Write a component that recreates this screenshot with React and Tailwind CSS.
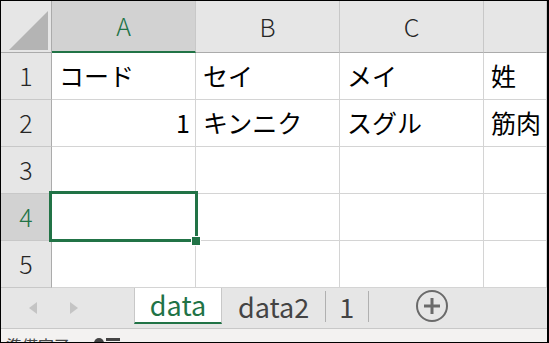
import { useState } from 'react';

const font = { fontFamily: '"Noto Sans CJK JP", "Noto Sans", sans-serif' };

const columns = ['A', 'B', 'C', ''];

const rows = [
  ['コード', 'セイ', 'メイ', '姓'],
  ['1', 'キンニク', 'スグル', '筋肉'],
  ['', '', '', ''],
  ['', '', '', ''],
  ['', '', '', ''],
];

const Corner = () => (
  <div className="relative bg-[#e6e6e6] border-r border-b border-[#ababab]">
    <svg width="50" height="51" className="absolute left-0 top-0">
      <polygon points="8,49 47,10 47,49" fill="#b4b4b4" />
    </svg>
  </div>
);

const ColumnHeader = ({ label, active }) => (
  <div
    className={
      active
        ? 'flex items-center justify-center bg-[#d2d2d2] border-r border-[#c8c8c8] border-b-2 border-b-[#217346] text-[#217346] text-[25px] font-light'
        : 'flex items-center justify-center bg-[#e6e6e6] border-r border-[#c8c8c8] border-b border-b-[#ababab] text-[#262626] text-[25px] font-light'
    }
  >
    {label}
  </div>
);

const RowHeader = ({ n, active }) => (
  <div
    className={
      active
        ? 'flex items-center justify-center bg-[#d2d2d2] border-r border-[#ababab] border-b border-b-[#c8c8c8] text-[#217346] text-[25px] font-light'
        : 'flex items-center justify-center bg-[#e6e6e6] border-r border-[#ababab] border-b border-b-[#c8c8c8] text-[#262626] text-[25px] font-light'
    }
  >
    {n}
  </div>
);

const Cell = ({ value, selected }) => {
  const isNumber = value !== '' && !isNaN(Number(value));
  return (
    <div
      className={
        'relative flex items-center border-r border-b border-[#d4d4d4] text-[25px] text-black whitespace-nowrap overflow-visible ' +
        (isNumber ? 'justify-end pr-[5px]' : 'pl-[7px]')
      }
    >
      {value}
      {selected && (
        <div className="absolute -left-[3px] -top-[3px] w-[149px] h-[51px] border-[3px] border-[#217346] z-10">
          <div className="absolute left-[139px] top-[42px] w-[8px] h-[8px] bg-[#217346] border border-white box-content" />
        </div>
      )}
    </div>
  );
};

const App = () => {
  const [activeSheet] = useState('data');

  return (
    <div
      className="w-[549px] h-[343px] border border-black border-r-2 overflow-hidden flex flex-col bg-white"
      style={font}
    >
      <div className="grid grid-cols-[51px_144px_144px_144px_1fr] grid-rows-[52px_47px_47px_47px_47px_47px] overflow-hidden">
        <Corner />
        {columns.map((c, i) => (
          <ColumnHeader key={i} label={c} active={i === 0} />
        ))}
        {rows.map((row, r) => (
          <div key={r} className="contents">
            <RowHeader n={r + 1} active={r === 3} />
            {row.map((v, c) => (
              <Cell key={c} value={v} selected={r === 3 && c === 0} />
            ))}
          </div>
        ))}
      </div>

      <div className="h-[41px] flex items-stretch bg-[#e6e6e6] border-b border-[#c8c8c8]">
        <div className="w-[133px] flex items-center">
          <svg width="10" height="14" className="ml-[27px]">
            <polygon points="9,1 1,7 9,13" fill="#c4c4c4" />
          </svg>
          <svg width="10" height="14" className="ml-[31px]">
            <polygon points="1,1 9,7 1,13" fill="#c4c4c4" />
          </svg>
        </div>
        <div className="w-[88px] h-[36px] bg-white border-l border-r border-[#c8c8c8] border-b-2 border-b-[#217346] flex items-center justify-center text-[27px] text-[#217346] leading-none pb-[2px]">
          {activeSheet}
        </div>
        <div className="flex items-center text-[27px] text-[#444444] leading-none pb-[4px]">
          <span className="pl-[16px] pr-[16px]">data2</span>
          <span className="w-px h-[31px] bg-[#b0b0b0]" />
          <span className="pl-[13px] pr-[14px]">1</span>
          <span className="w-px h-[31px] bg-[#b0b0b0]" />
        </div>
        <div className="flex items-center pl-[46px] pb-[4px]">
          <svg width="34" height="34" viewBox="0 0 34 34">
            <circle cx="17" cy="17" r="15" fill="none" stroke="#6a6a6a" strokeWidth="2" />
            <rect x="9" y="15.5" width="16" height="3" fill="#6a6a6a" />
            <rect x="15.5" y="9" width="3" height="16" fill="#6a6a6a" />
          </svg>
        </div>
      </div>

      <div className="flex-1 bg-[#f3f2f1] overflow-hidden relative">
        <div className="flex items-start gap-[24px] pl-[5px] pt-[8px] text-[16px] text-[#444444] leading-none">
          <span>準備完了</span>
          <span className="flex items-start gap-[2px]">
            <span className="w-[10px] h-[10px] rounded-full bg-[#444444] mt-[1px]" />
            <span className="w-[14px] h-[3px] bg-[#444444] mt-[1px]" />
          </span>
        </div>
      </div>
    </div>
  );
};

export default App;
